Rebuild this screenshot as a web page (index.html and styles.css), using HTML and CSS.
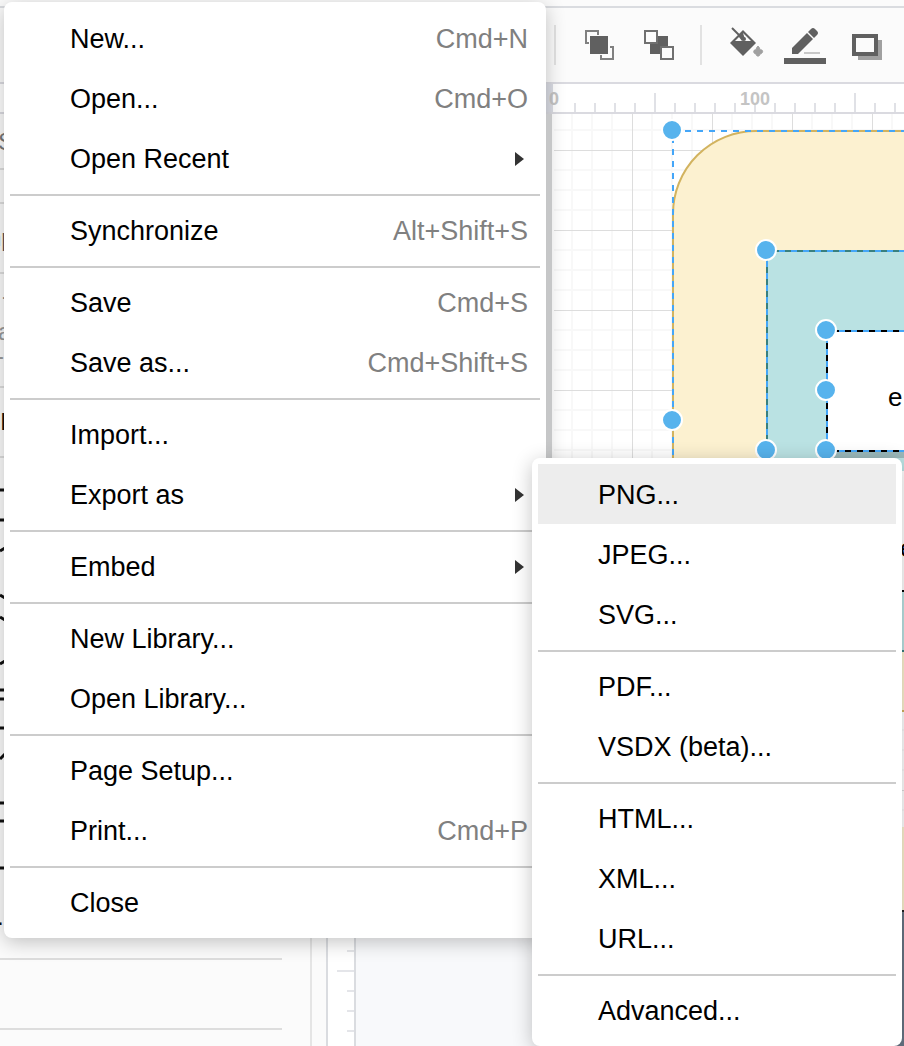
FILE: index.html
```html
<!DOCTYPE html>
<html lang="en">
<head>
<meta charset="utf-8">
<title>Diagram editor</title>
<link rel="stylesheet" href="styles.css">
</head>
<body>
<div class="app">
  <header class="menubar"></header>
  <div class="toolbar">
    <span class="divider"></span>
    <button class="tool" aria-label="To Front"><svg width="60" height="74"><rect x="21" y="28" width="18" height="18" fill="#606060"/><path d="M29 27V23H17V35H20M41 39H44V51H32V47" fill="none" stroke="#808080" stroke-width="2"/></svg></button>
    <button class="tool" aria-label="To Back"><svg width="60" height="74"><rect x="21" y="28" width="18" height="18" fill="#606060"/><path d="M16 23H28V35H16ZM32 39H44V51H32Z" fill="#fbfbfb" stroke="#707070" stroke-width="2"/></svg></button>
    <span class="divider"></span>
    <button class="tool" aria-label="Fill Color"><svg width="60" height="74"><path d="M15 35 28 22 41 35 28 48Z" fill="#606060"/><path d="M20 33 24 29 27 33 30 31 28 25 36 33Z" fill="#fbfbfb"/><path d="M17 20 29 32" stroke="#606060" stroke-width="2"/><circle cx="29" cy="31" r="2" fill="#606060"/><path d="M43 38Q45 40 45 42C49 41 48 46 45 46L44 48H42L41 46C38 46 38 41 41 42Q41 40 43 38Z" fill="#a0a0a0" stroke="#a0a0a0"/></svg></button>
    <button class="tool" aria-label="Line Color"><svg width="60" height="74"><path d="M17 46V40L32 25 38 31 23 46Z" fill="#606060"/><path d="M33 24 36 21Q38 19 40 21L42 23Q44 25 42 27L39 30Z" fill="#606060"/><path d="M29 45H45" stroke="#c8c8c8" stroke-width="2"/><path d="M9 50H51V56H9Z" fill="#606060"/></svg></button>
    <button class="tool" aria-label="Shadow"><svg width="60" height="74"><path d="M23 32H47V52H23Z" fill="#a0a0a0"/><path d="M19 28H41V46H19Z" fill="#fbfbfb" stroke="#606060" stroke-width="4"/></svg></button>
  </div>
  <div class="ruler-top">
    <svg width="100%" height="28">
      <defs><pattern id="ticks" x="554" width="20" height="28" patternUnits="userSpaceOnUse"><path d="M1 19V28" stroke="#e0e1e6" stroke-width="2"/></pattern></defs>
      <rect x="356" width="197" height="28" fill="#dadce4"/>
      <rect x="560" width="100%" height="28" fill="url(#ticks)"/>
      <path d="M655 9V28M855 9V28" stroke="#e0e1e6" stroke-width="2"/>
      <g class="ruler-label"><text x="554" y="21">0</text><text x="755" y="21">100</text></g>
    </svg>
  </div>
  <div class="workspace">
    <aside class="sidebar">
      <svg class="shapes" width="100%" height="100%">
        <g stroke="#dddddd" stroke-width="2"><path d="M0 55H282M0 89H282M0 159H282M0 273H282M0 343H282M0 845H282M0 915H282"/></g>
        <g fill="none" stroke="#111" stroke-width="3"><path d="M0 376H60M0 406H60M0 437 5 434M0 481 5 484M0 503 5 506M0 550 5 547M0 576H60M0 585H60M0 614H60M0 645 5 640M0 689H60M0 707H60M0 754H60"/></g>
        <g class="side-text"><text x="-2" y="36" fill="#777">S</text><text x="-12" y="132" fill="#555">np</text><text x="2" y="190" fill="#888">-</text><text x="-2" y="226" fill="#999">a</text><text x="-4" y="250" fill="#999">-</text><text x="0" y="316" fill="#111">I</text><text x="-3" y="811" fill="#111">.</text></g>
      </svg>
    </aside>
    <div class="splitter"></div>
    <div class="ruler-left"><svg width="26" height="100%"><path d="M19 837H26M9 857H26M19 877H26M19 897H26M19 917H26" stroke="#e4e5e9" stroke-width="2"/></svg></div>
    <main class="canvas">
      <svg class="diagram" width="100%" height="100%">
        <defs>
          <pattern id="grid" x="196" y="36" width="80" height="80" patternUnits="userSpaceOnUse"><path d="M20 0V80M40 0V80M60 0V80M0 20H80M0 40H80M0 60H80" stroke="#f8f8f8" stroke-width="2"/><path d="M0 0H80V1H1V80H0Z" fill="#dddddd"/></pattern>
          <linearGradient id="edge"><stop offset="0" stop-color="#e8e9ea"/><stop offset="1" stop-color="#d4d5d6"/></linearGradient>
        </defs>
        <rect x="186" width="10" height="800" fill="url(#edge)"/>
        <rect x="196" width="100%" height="800" fill="#fff"/>
        <rect x="198" width="100%" height="800" fill="url(#grid)"/>
        <path d="M900 17H400A83 83 0 0 0 317 100V597H900" fill="#fcf1d0" stroke="#d2b35f" stroke-width="2"/>
        <path d="M900 137H411V537H900" fill="#bae2e3" stroke="#38807f" stroke-width="2"/>
        <path d="M471 337H900V344H471Z" fill="#9ab8ba"/>
        <path d="M900 217H471V337H900" fill="#fff" stroke="#000" stroke-width="2"/>
        <path d="M471 357H900V477H471Z" fill="#fff"/>
        <path d="M471 477H900" stroke="#000" stroke-width="2"/>
        <path d="M471 713H900V797H471Z" fill="#fcf1d0"/>
        <path d="M471 797H900V940H471Z" fill="#687585" stroke="#222" stroke-width="2"/>
        <g class="selection"><path d="M317 17H900M411 137H900M471 217H900M471 337H900M540 357H900M540 597H900M540 713H900"/><path d="M317 23V597M411 147V337M471 223V337"/></g>
        <g class="handles"><circle cx="316" cy="16" r="10"/><circle cx="316" cy="306" r="10"/><circle cx="410" cy="136" r="10"/><circle cx="410" cy="336" r="10"/><circle cx="470" cy="216" r="10"/><circle cx="470" cy="276" r="10"/><circle cx="470" cy="336" r="10"/></g>
        <g class="node-text"><text x="532" y="292">e</text><text x="544" y="443">e</text></g>
      </svg>
    </main>
  </div>
</div>

<nav class="menu file-menu" aria-label="File">
  <button class="item">New...<kbd>Cmd+N</kbd></button>
  <button class="item">Open...<kbd>Cmd+O</kbd></button>
  <button class="item">Open Recent<i class="arrow"></i></button>
  <hr>
  <button class="item">Synchronize<kbd>Alt+Shift+S</kbd></button>
  <hr>
  <button class="item">Save<kbd>Cmd+S</kbd></button>
  <button class="item">Save as...<kbd>Cmd+Shift+S</kbd></button>
  <hr>
  <button class="item">Import...</button>
  <button class="item">Export as<i class="arrow"></i></button>
  <hr>
  <button class="item">Embed<i class="arrow"></i></button>
  <hr>
  <button class="item">New Library...</button>
  <button class="item">Open Library...</button>
  <hr>
  <button class="item">Page Setup...</button>
  <button class="item">Print...<kbd>Cmd+P</kbd></button>
  <hr>
  <button class="item">Close</button>
</nav>

<nav class="menu export-menu" aria-label="Export as">
  <button class="item active">PNG...</button>
  <button class="item">JPEG...</button>
  <button class="item">SVG...</button>
  <hr>
  <button class="item">PDF...</button>
  <button class="item">VSDX (beta)...</button>
  <hr>
  <button class="item">HTML...</button>
  <button class="item">XML...</button>
  <button class="item">URL...</button>
  <hr>
  <button class="item">Advanced...</button>
</nav>
</body>
</html>
```
FILE: styles.css
```css
* { box-sizing: border-box; }
body {
  margin: 0;
  font-family: "Liberation Sans", Arial, sans-serif;
  color: #000;
  overflow: hidden;
}
svg { display: block; }
button { border: 0; background: none; padding: 0; color: inherit; font: inherit; }

.app { display: flex; flex-direction: column; height: 100vh; background: #fbfbfb; }
.menubar { height: 8px; flex: none; border-bottom: 2px solid #dadce0; }
.toolbar {
  display: flex;
  align-items: center;
  flex: none;
  height: 76px;
  padding-left: 554px;
  border-bottom: 2px solid #dadae0;
  overflow: hidden;
}
.divider { flex: none; width: 2px; height: 40px; background: #e2e2e2; margin: 0 13px 0 11px; }
.divider:first-child { margin-left: 0; }
.tool { flex: none; }
.ruler-top { flex: none; height: 30px; background: #fff; border-bottom: 2px solid #dadae0; }
.ruler-label { font-size: 18px; font-weight: bold; fill: #c4c4c4; text-anchor: middle; }

.workspace { display: flex; flex: 1; min-height: 0; }
.sidebar { flex: none; width: 312px; border-right: 2px solid #e5e5e5; overflow: hidden; }
.side-text { font-size: 24px; }
.splitter { flex: none; width: 14px; }
.ruler-left { flex: none; width: 30px; background: #fff; border: solid #dadce0; border-width: 0 2px; }
.canvas { flex: 1; min-width: 0; background: #f8f9fb; overflow: hidden; }
.selection { fill: none; stroke: #44a6f8; stroke-width: 2; stroke-dasharray: 6 6; }
.handles { fill: #57b3ed; stroke: #fff; stroke-width: 2; }
.node-text { font-size: 26px; }

.menu {
  position: absolute;
  padding: 6px;
  border-radius: 8px;
  background: #fff;
  box-shadow: 0 4px 20px rgba(0, 0, 0, .24);
  font-size: 27px;
}
.file-menu { left: 4px; top: 2px; width: 542px; }
.export-menu { left: 532px; top: 458px; width: 370px; }
.item {
  display: flex;
  align-items: center;
  justify-content: space-between;
  width: 100%;
  height: 60px;
  padding: 2px 12px 0 60px;
  text-align: left;
}
.item.active { background: #ededed; }
.item kbd { font: inherit; color: #808080; }
.menu hr { height: 2px; margin: 6px 0 4px; border: 0; background: #ccc; }
.arrow {
  margin-right: 4px;
  border: solid transparent;
  border-width: 7px 0 7px 9px;
  border-left-color: #333;
}
```
